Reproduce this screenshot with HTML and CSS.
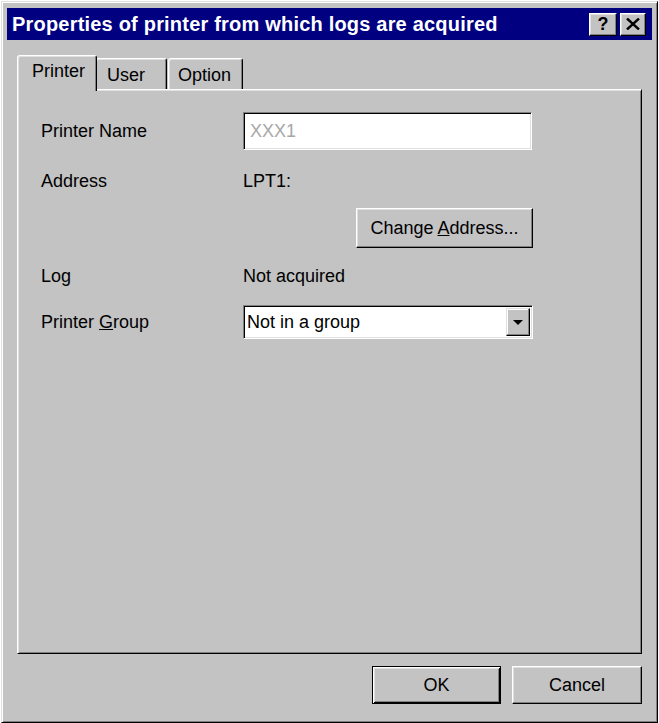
FILE: index.html
```html
<!DOCTYPE html>
<html lang="en">
<head>
<meta charset="utf-8">
<title>Properties of printer from which logs are acquired</title>
<link rel="stylesheet" href="styles.css">
</head>
<body>
<div class="dialog">
  <div class="titlebar">
    <span class="title">Properties of printer from which logs are acquired</span>
    <div class="tb-buttons">
      <div class="tb-btn help">?</div>
      <div class="tb-btn close">
        <svg width="14" height="12" viewBox="0 0 14 12"><path d="M1 0.5 L13 11.5 M13 0.5 L1 11.5" stroke="#000" stroke-width="2.4" fill="none"/></svg>
      </div>
    </div>
  </div>

  <div class="tabs">
    <div class="tab active">Printer</div>
    <div class="tab user">User</div>
    <div class="tab option">Option</div>
  </div>

  <div class="panel">
    <div class="row r1">
      <div class="label">Printer Name</div>
      <div class="field disabled">XXX1</div>
    </div>
    <div class="row r2">
      <div class="label">Address</div>
      <div class="value">LPT1:</div>
    </div>
    <div class="row r3">
      <div class="label"></div>
      <div class="value right"><div class="btn change"><span>Change <u>A</u>ddress...</span></div></div>
    </div>
    <div class="row r4">
      <div class="label">Log</div>
      <div class="value">Not acquired</div>
    </div>
    <div class="row r5">
      <div class="label">Printer <u>G</u>roup</div>
      <div class="combo">
        <span class="combo-text">Not in a group</span>
        <div class="combo-btn"><span class="arrow"></span></div>
      </div>
    </div>
  </div>

  <div class="actions">
    <div class="btn default">OK</div>
    <div class="btn cancel">Cancel</div>
  </div>
</div>
</body>
</html>
```

FILE: styles.css
```css
html, body {
  margin: 0;
  padding: 0;
  background: #ffffff;
}
body {
  font-family: "Liberation Sans", Arial, sans-serif;
  font-size: 18px;
  color: #000;
}
.dialog {
  margin: 1px 0 0 1px;
  width: 657px;
  height: 722px;
  box-sizing: border-box;
  background: #c3c3c3;
  border: 1px solid;
  border-color: #dfdfdf #000 #000 #dfdfdf;
  box-shadow: inset 1px 1px #fff, inset -1px -1px #808080;
  padding: 6px 5px 0 5px;
  display: flex;
  flex-direction: column;
}
.titlebar {
  height: 32px;
  background: #000080;
  display: flex;
  align-items: center;
  justify-content: space-between;
  padding: 0 6px 0 5px;
}
.title {
  color: #fff;
  font-weight: bold;
  font-size: 20px;
  letter-spacing: 0.2px;
  white-space: nowrap;
}
.tb-buttons {
  display: flex;
  gap: 3px;
}
.tb-btn {
  height: 23px;
  box-sizing: border-box;
  background: #c3c3c3;
  border: 1px solid;
  border-color: #fff #000 #000 #fff;
  box-shadow: inset -1px -1px #808080, inset 1px 1px #dfdfdf;
  display: flex;
  align-items: center;
  justify-content: center;
}
.tb-btn.help {
  width: 28px;
  font-weight: bold;
  font-size: 18px;
  line-height: 1;
}
.tb-btn.close {
  width: 26px;
}

.tabs {
  margin: 15px 10px 0 10px;
  height: 34px;
  display: flex;
  align-items: flex-end;
}
.tab {
  box-sizing: border-box;
  height: 31px;
  background: #c3c3c3;
  border-top: 1px solid #fff;
  border-left: 1px solid #fff;
  border-right: 1px solid #000;
  border-radius: 3px 3px 0 0;
  box-shadow: inset 1px 1px #dfdfdf, inset -1px 0 #808080;
  display: flex;
  align-items: center;
  padding: 2px 0 0 9px;
  position: relative;
}
.tab.active {
  width: 80px;
  height: 36px;
  margin-bottom: -2px;
  margin-right: -2px;
  z-index: 2;
  padding: 0 0 4px 14px;
}
.tab.user {
  width: 72px;
  padding-left: 11px;
}
.tab.option {
  width: 75px;
  margin-left: 1px;
}

.panel {
  margin: 0 10px;
  height: 565px;
  box-sizing: border-box;
  border: 1px solid;
  border-color: #fff #000 #000 #fff;
  box-shadow: inset 1px 1px #dfdfdf, inset -1px -1px #808080;
  padding: 22px 0 0 23px;
  display: flex;
  flex-direction: column;
}
.row {
  display: flex;
  align-items: center;
}
.label {
  width: 202px;
  flex: none;
}
.value {
  width: 290px;
}
.value.right {
  display: flex;
  justify-content: flex-end;
}
.r1 { height: 38px; }
.r2 { height: 22px; margin-top: 20px; }
.r3 { height: 40px; margin-top: 16px; }
.r4 { height: 22px; margin-top: 17px; }
.r5 { height: 34px; margin-top: 18px; }

.field {
  width: 289px;
  height: 38px;
  box-sizing: border-box;
  background: #fff;
  border: 1px solid;
  border-color: #808080 #fff #fff #808080;
  box-shadow: inset 1px 1px #000, inset -1px -1px #dfdfdf;
  display: flex;
  align-items: center;
  padding-left: 6px;
}
.field.disabled {
  color: #a8a8a8;
}

.btn {
  box-sizing: border-box;
  background: #c3c3c3;
  border: 1px solid;
  border-color: #fff #000 #000 #fff;
  box-shadow: inset -1px -1px #808080, inset 1px 1px #dfdfdf;
  display: flex;
  align-items: center;
  justify-content: center;
}
.btn.change {
  width: 177px;
  height: 40px;
}
.combo {
  width: 290px;
  height: 34px;
  box-sizing: border-box;
  background: #fff;
  border: 1px solid;
  border-color: #808080 #fff #fff #808080;
  box-shadow: inset 1px 1px #000, inset -1px -1px #dfdfdf;
  display: flex;
  align-items: center;
  justify-content: space-between;
  padding: 2px 2px 2px 3px;
}
.combo-btn {
  width: 24px;
  height: 28px;
  box-sizing: border-box;
  background: #c3c3c3;
  border: 1px solid;
  border-color: #dfdfdf #000 #000 #dfdfdf;
  box-shadow: inset -1px -1px #808080, inset 1px 1px #fff;
  display: flex;
  align-items: center;
  justify-content: center;
}
.arrow {
  width: 0;
  height: 0;
  border-left: 5px solid transparent;
  border-right: 5px solid transparent;
  border-top: 5px solid #000;
}

.actions {
  margin: 12px 10px 0 0;
  display: flex;
  justify-content: flex-end;
  gap: 11px;
}
.actions .btn {
  height: 38px;
}
.btn.default {
  width: 129px;
  border-color: #000;
  box-shadow: inset 1px 1px #fff, inset -1px -1px #000, inset 2px 2px #dfdfdf, inset -2px -2px #808080;
}
.btn.cancel {
  width: 130px;
}
```
